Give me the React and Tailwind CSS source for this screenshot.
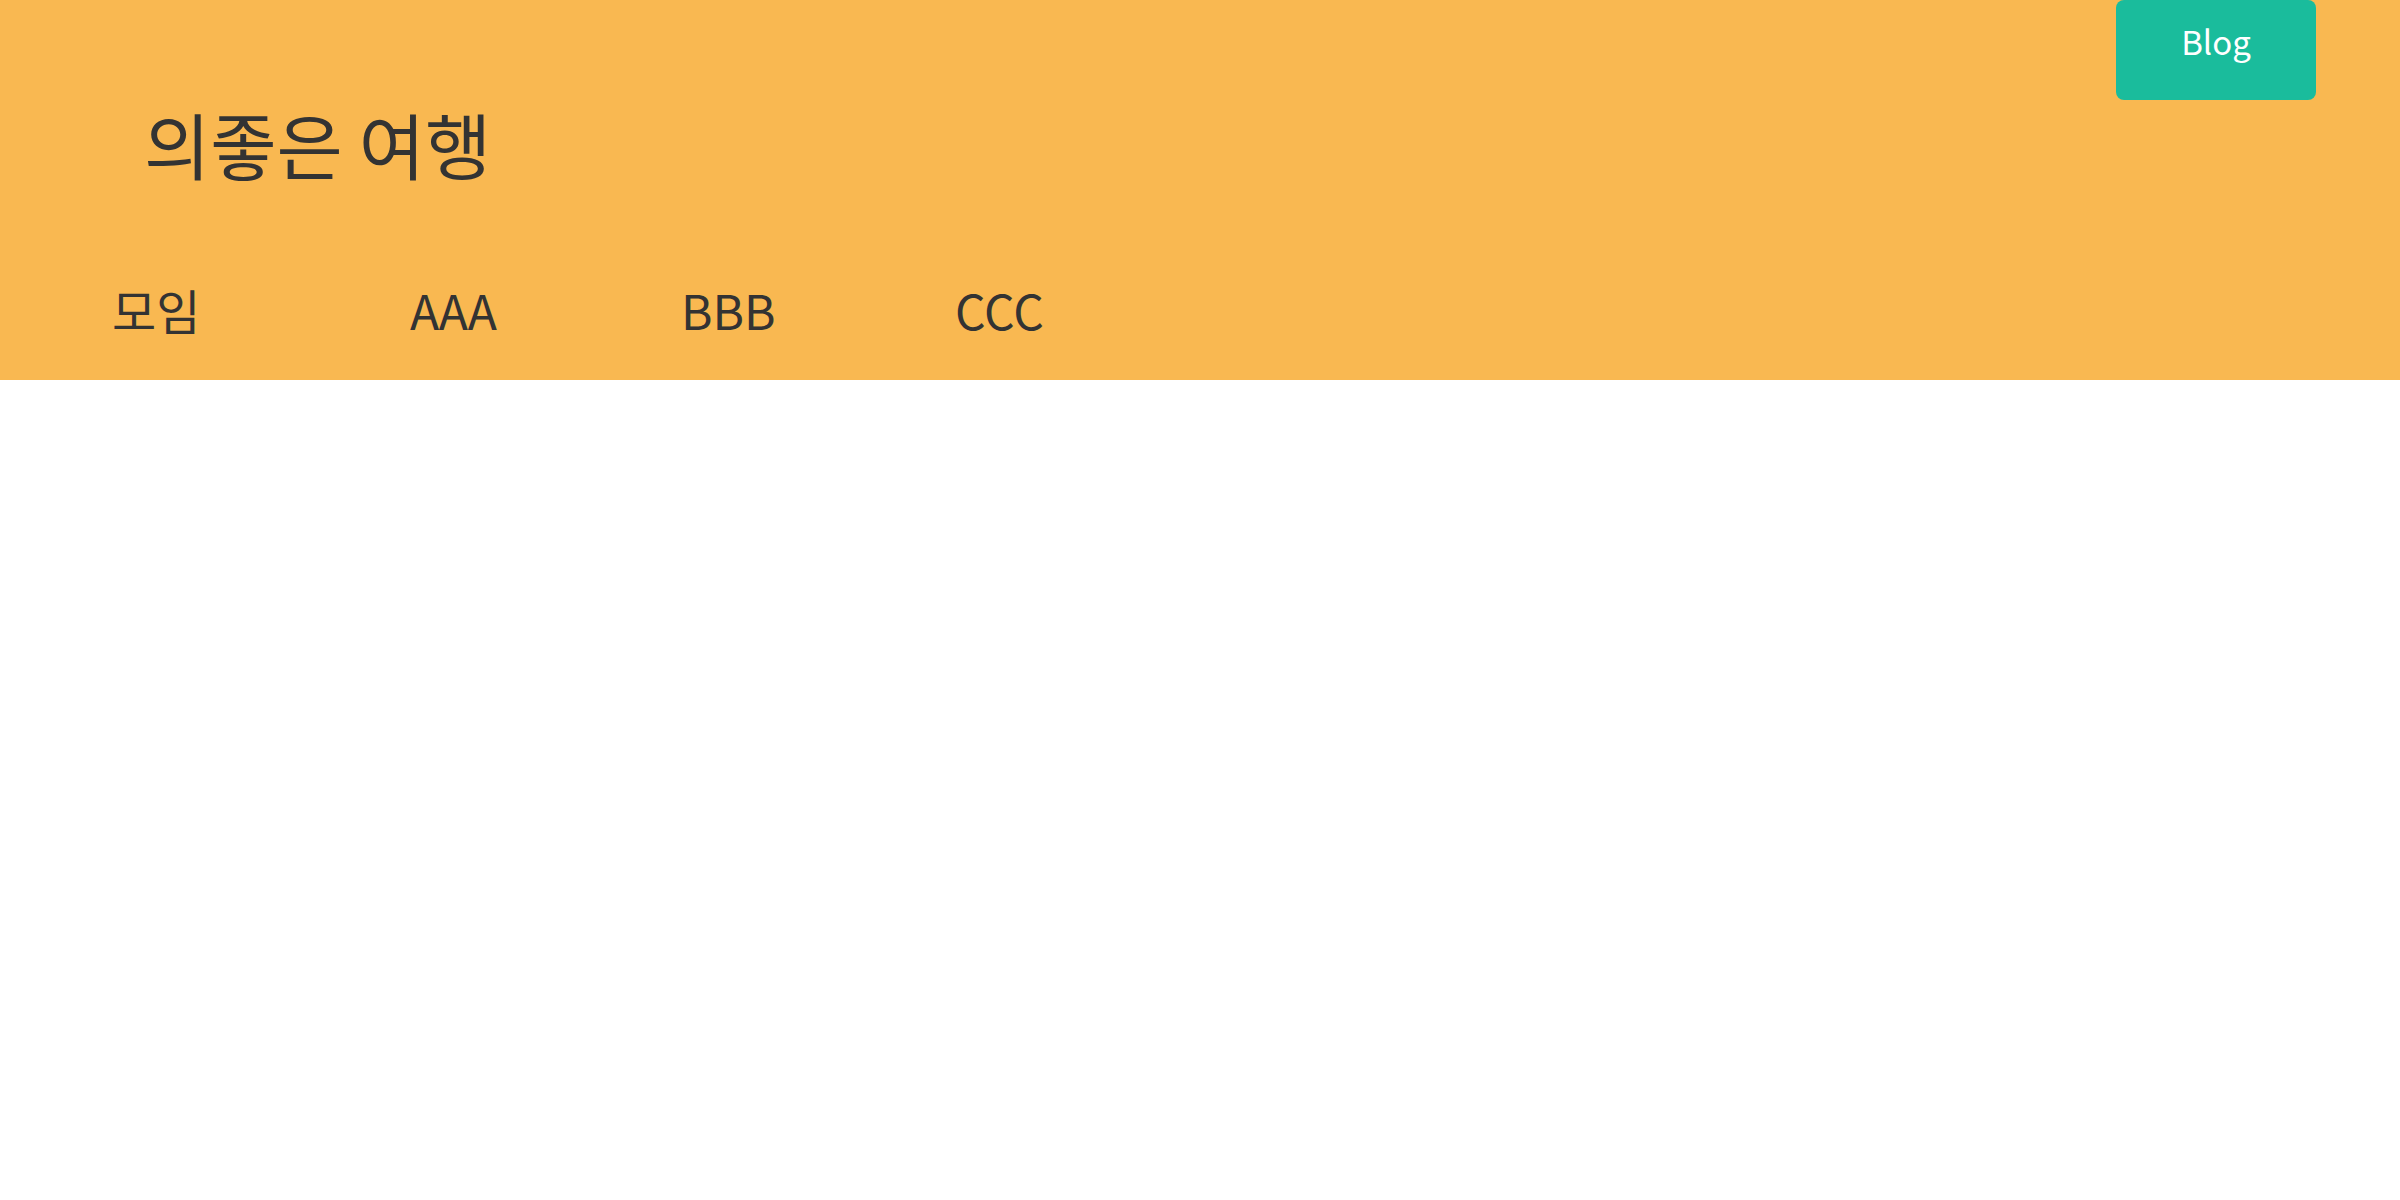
export default function App() {
  return (
    <div className="min-h-screen w-full bg-white font-['Noto_Sans_CJK_KR','Noto_Sans',sans-serif]">
      <header className="relative h-[380px] bg-[#f9b851] text-[#333333]">
        <a
          href="#"
          className="absolute right-[84px] top-0 flex h-[100px] w-[200px] items-center justify-center rounded-lg bg-[#1abc9c] pb-[16px] text-[33px] font-normal text-white"
        >
          Blog
        </a>
        <div className="pl-[144px] pt-[107px]">
          <h1 className="text-[72px] font-normal leading-none">의좋은 여행</h1>
        </div>
        <nav className="pt-[106px]">
          <ul className="flex pl-[112px] text-[48px] font-normal leading-none">
            <li className="w-[298px]">모임</li>
            <li className="w-[271px]">AAA</li>
            <li className="w-[274px]">BBB</li>
            <li>CCC</li>
          </ul>
        </nav>
      </header>
    </div>
  );
}
